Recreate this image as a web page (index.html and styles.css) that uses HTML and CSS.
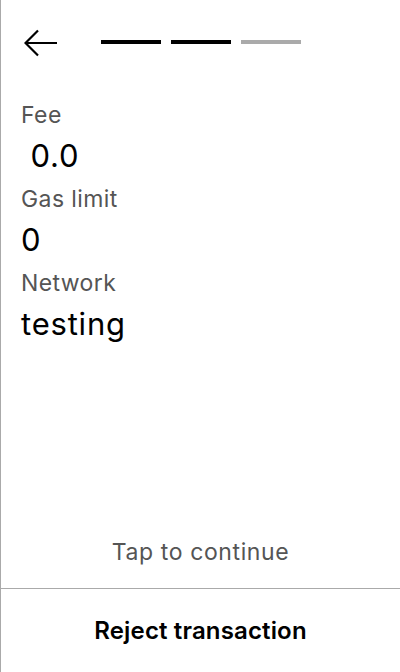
FILE: index.html
```html
<!DOCTYPE html>
<html>
<head>
<meta charset="utf-8">
<link rel="stylesheet" href="styles.css">
</head>
<body>
<div class="screen">
  <div class="header">
    <svg class="back" width="34" height="28" viewBox="0 0 34 28">
      <path d="M33 14 H2 M14 1.5 L1.5 14 L14 26.5" fill="none" stroke="#000" stroke-width="2.2"/>
    </svg>
    <div class="steps">
      <span class="step done"></span>
      <span class="step done"></span>
      <span class="step"></span>
    </div>
  </div>
  <div class="details">
    <div class="label">Fee</div>
    <div class="value">&nbsp;0.0</div>
    <div class="label">Gas limit</div>
    <div class="value">0</div>
    <div class="label">Network</div>
    <div class="value">testing</div>
  </div>
  <div class="spacer"></div>
  <div class="tap">Tap to continue</div>
  <div class="reject">Reject transaction</div>
</div>
</body>
</html>
```
FILE: styles.css
```css
html, body {
  margin: 0;
  padding: 0;
  background: #fff;
}
body {
  font-family: Inter, "Noto Sans", sans-serif;
}
.screen {
  width: 399px;
  height: 672px;
  border-left: 1px solid #aaa;
  display: flex;
  flex-direction: column;
}
.header {
  height: 95px;
  display: flex;
  align-items: flex-start;
  padding-left: 23px;
  box-sizing: border-box;
  padding-top: 29px;
  flex-shrink: 0;
}
.back {
  display: block;
}
.steps {
  display: flex;
  gap: 10px;
  margin-left: 43px;
  margin-top: 11px;
}
.step {
  width: 60px;
  height: 4px;
  background: #aaa;
}
.step.done {
  background: #000;
}
.details {
  padding-left: 20px;
}
.label {
  font-size: 23px;
  line-height: 41px;
  letter-spacing: 0.4px;
  color: #555;
}
.value {
  font-size: 31px;
  line-height: 43px;
  letter-spacing: 0.8px;
  color: #000;
  margin-top: -2px;
  margin-bottom: 2px;
}
.spacer {
  flex: 1;
}
.tap {
  text-align: center;
  font-size: 23px;
  letter-spacing: 0.6px;
  color: #555;
  line-height: 40px;
  padding-bottom: 16px;
  border-bottom: 1px solid #aaa;
}
.reject {
  height: 83px;
  flex-shrink: 0;
  display: flex;
  align-items: center;
  justify-content: center;
  font-size: 24px;
  font-weight: 600;
  letter-spacing: 0.15px;
  color: #000;
}
```
